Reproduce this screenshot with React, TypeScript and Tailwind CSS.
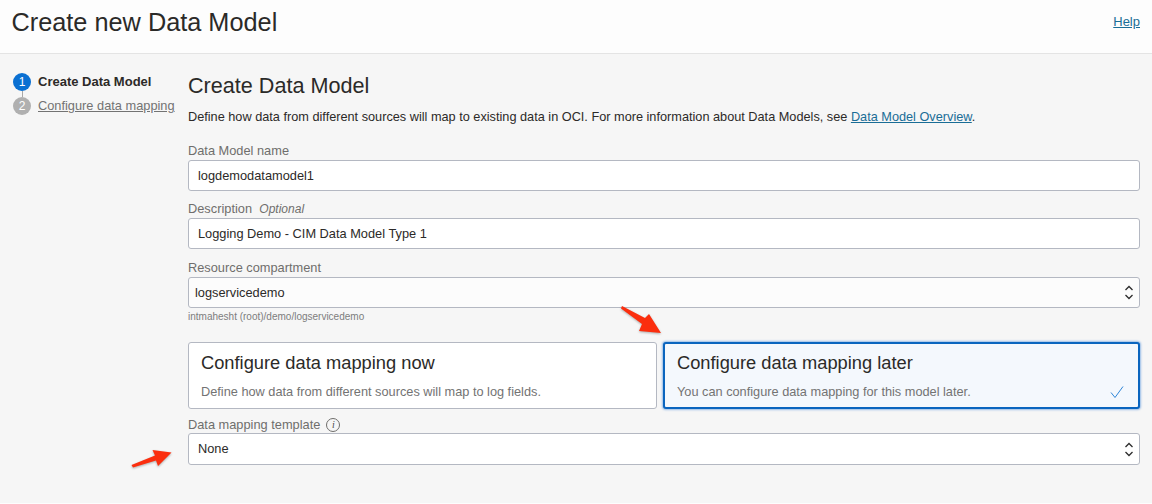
function SelectCaret() {
  return (
    <svg className="h-[17px] w-[10px] shrink-0" viewBox="0 0 10 17" fill="none" stroke="#2c2c2c" strokeWidth="1.3">
      <path d="M1.5 6 L5 2.5 L8.5 6" />
      <path d="M1.5 11 L5 14.5 L8.5 11" />
    </svg>
  );
}

function Field({ label, optional, value, className }: { label: string; optional?: boolean; value: string; className: string }) {
  return (
    <div className={className}>
      <div className="h-[18px] text-[12.8px] leading-[18px] text-[#6f6e6c]">
        {label}
        {optional ? <i className="ml-[4px] text-[12px]"> Optional</i> : null}
      </div>
      <div className="flex h-[31px] items-center rounded-[3px] border border-[#b4b8c2] bg-white pl-[9px] text-[12.8px] text-[#2c2a28]">
        {value}
      </div>
    </div>
  );
}

export default function App() {
  return (
    <div className="relative h-[504px] w-[1152px] overflow-hidden bg-[#f6f6f6] font-['Liberation_Sans',Arial,sans-serif]">
      <header className="flex h-[54px] items-start justify-between border-b border-[#e4e4e4] bg-[#fdfdfd] pr-[12px] pl-[11.5px]">
        <h1 className="pt-[7px] text-[25.3px] leading-[30px] text-[#2b2a28]">Create new Data Model</h1>
        <a className="pt-[14px] text-[13px] leading-[16px] text-[#1a6d96] underline" href="#">
          Help
        </a>
      </header>

      <div className="flex pt-[18px]">
        <nav className="w-[188px] shrink-0 pt-[1px] pl-[13px]">
          <div className="flex h-[18px] items-center gap-[7px]">
            <span className="flex h-[18px] w-[18px] items-center justify-center rounded-full bg-[#0a70d2] text-[12px] text-white">1</span>
            <span className="text-[13px] font-bold text-[#2c2a28]">Create Data Model</span>
          </div>
          <div className="ml-[8.5px] h-[6px] w-px bg-[#a8a8a8]" />
          <div className="flex h-[18px] items-center gap-[7px]">
            <span className="flex h-[18px] w-[18px] items-center justify-center rounded-full bg-[#b0b0b0] text-[12px] text-white">2</span>
            <a className="text-[12.8px] whitespace-nowrap text-[#737373] underline" href="#">
              Configure data mapping
            </a>
          </div>
        </nav>

        <main className="w-[952px]">
          <h2 className="text-[21.6px] leading-[27px] text-[#2b2a28]">Create Data Model</h2>
          <p className="mt-[9px] mb-[16px] text-[12.73px] leading-[18px] text-[#2c2a28]">
            Define how data from different sources will map to existing data in OCI. For more information about Data Models, see{" "}
            <a className="text-[#1a6d96] underline" href="#">
              Data Model Overview
            </a>
            .
          </p>

          <Field className="mb-[9px]" label="Data Model name" value="logdemodatamodel1" />
          <Field className="mb-[10px]" label="Description" optional value="Logging Demo - CIM Data Model Type 1" />

          <div className="h-[18px] text-[12.8px] leading-[18px] text-[#6f6e6c]">Resource compartment</div>
          <div className="flex h-[31px] items-center justify-between rounded-[3px] border border-[#b4b8c2] bg-[#fcfcfc] pr-[5px] pl-[6px] text-[12.8px] text-[#2c2a28]">
            logservicedemo
            <SelectCaret />
          </div>
          <div className="mt-[2px] h-[14px] text-[10px] leading-[14px] text-[#7d7d7d]">intmahesht (root)/demo/logservicedemo</div>

          <div className="mt-[18px] flex gap-[6px]">
            <div className="h-[67px] w-[469px] rounded-[3px] border border-[#b4b8c2] bg-white px-[12px] pt-[8px]">
              <div className="text-[18.3px] leading-[24px] text-[#2b2a28]">Configure data mapping now</div>
              <div className="mt-[9px] text-[12.75px] leading-[16px] text-[#737373]">Define how data from different sources will map to log fields.</div>
            </div>
            <div className="h-[67px] w-[477px] rounded-[3px] border-2 border-[#0a65bf] bg-[#f4f8fd] px-[12px] pt-[7px] shadow-[0_0_2px_1px_rgba(90,150,220,0.6)]">
              <div className="text-[18.3px] leading-[24px] text-[#2b2a28]">Configure data mapping later</div>
              <div className="mt-[9px] flex items-center justify-between pr-[2px] text-[12.75px] leading-[16px] text-[#737373]">
                You can configure data mapping for this model later.
                <svg className="h-[14px] w-[14px]" viewBox="0 0 14 14" fill="none" stroke="#2f86d8" strokeWidth="1">
                  <path d="M1 7.5 L5 12.5 L13 1.5" />
                </svg>
              </div>
            </div>
          </div>

          <div className="mt-[7px] flex h-[17px] items-center gap-[6px] text-[12.8px] leading-[17px] text-[#6f6e6c]">
            Data mapping template
            <span className="flex h-[14px] w-[14px] items-center justify-center rounded-full border border-[#6f6e6c] font-['Liberation_Serif',serif] text-[10px] text-[#4a4a4a] italic">
              i
            </span>
          </div>
          <div className="flex h-[32px] items-center justify-between rounded-[3px] border border-[#b4b8c2] bg-white pr-[5px] pl-[9px] text-[12.8px] text-[#2c2a28]">
            None
            <SelectCaret />
          </div>
        </main>
      </div>

      {/* annotation arrows */}
      <svg className="absolute top-[300px] left-[610px] h-[40px] w-[60px] drop-shadow-[0_1px_1px_rgba(0,0,0,0.3)]" viewBox="610 300 60 40">
        <path d="M621 308.5 L622 306 L645 318 L649 314 L661 333 L639 331 L642 324 Z" fill="#fb2e0e" />
      </svg>
      <svg className="absolute top-[445px] left-[125px] h-[28px] w-[52px] drop-shadow-[0_1px_1px_rgba(0,0,0,0.3)]" viewBox="125 445 52 28">
        <path d="M131.5 465 L155 455.5 L152.5 450 L171.5 452.5 L158 466 L156 460.5 L133 467.5 Z" fill="#fb2e0e" />
      </svg>
      <div className="absolute bottom-0 left-0 h-px w-full bg-[#fdfdfd]" />
    </div>
  );
}
